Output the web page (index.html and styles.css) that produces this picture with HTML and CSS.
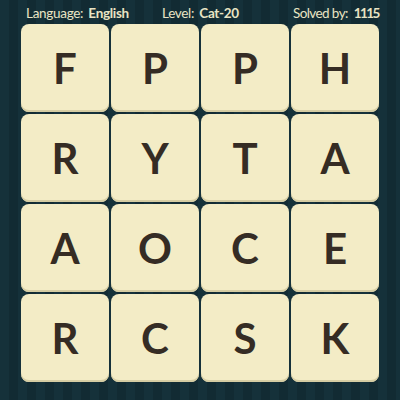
FILE: index.html
```html
<!DOCTYPE html>
<html>
<head>
<meta charset="utf-8">
<link rel="stylesheet" href="styles.css">
</head>
<body>
<div class="page">
  <div class="header">
    <span class="item lang">Language: <b>English</b></span>
    <span class="item level">Level: <b>Cat-20</b></span>
    <span class="item solved">Solved by: <b class="num">1115</b></span>
  </div>
  <div class="grid">
    <div class="tile">F</div><div class="tile">P</div><div class="tile">P</div><div class="tile">H</div>
    <div class="tile">R</div><div class="tile">Y</div><div class="tile">T</div><div class="tile">A</div>
    <div class="tile">A</div><div class="tile">O</div><div class="tile">C</div><div class="tile">E</div>
    <div class="tile">R</div><div class="tile">C</div><div class="tile">S</div><div class="tile">K</div>
  </div>
</div>
</body>
</html>
```
FILE: styles.css
```css
html, body {
  margin: 0;
  padding: 0;
}
body {
  width: 400px;
  height: 400px;
  overflow: hidden;
  background-color: #15313a;
  background-image: repeating-linear-gradient(90deg, #15313a 0px, #15313a 9px, #122b33 9px, #122b33 18px);
  font-family: Lato, "Open Sans", sans-serif;
}
.page {
  width: 400px;
  height: 400px;
}
.header {
  height: 24px;
  display: flex;
  align-items: center;
  color: #e9e4c4;
  font-size: 13.5px;
  padding-left: 26px;
  padding-top: 1px;
  box-sizing: border-box;
  letter-spacing: -0.3px;
}
.header b {
  font-weight: 700;
  margin-left: 2px;
}
.header .num {
  letter-spacing: -1.5px;
  margin-left: 3px;
}
.lang { width: 136px; }
.level { width: 131px; }
.solved { letter-spacing: -0.6px; }
.grid {
  margin-left: 21px;
  display: grid;
  grid-template-columns: repeat(4, 88px);
  grid-auto-rows: 88px;
  gap: 2px;
}
.tile {
  background: #f3ecc6;
  border-radius: 8px;
  box-shadow: inset 0 -2px 0 #d6cda3;
  display: flex;
  align-items: center;
  justify-content: center;
  color: #352c24;
  font-size: 42px;
  font-weight: 700;
}
```
